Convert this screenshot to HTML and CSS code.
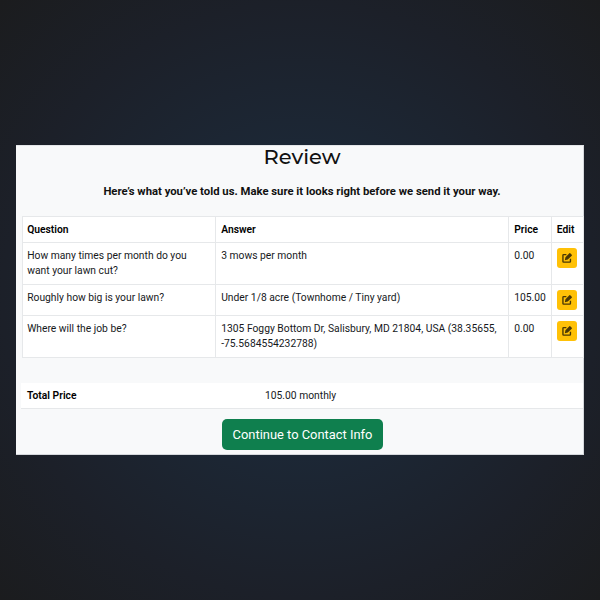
FILE: index.html
```html
<!DOCTYPE html>
<html lang="en">
<head>
  <meta charset="UTF-8">
  <meta name="viewport" content="width=device-width, initial-scale=1.0">
  <title>Review</title>
  <link rel="stylesheet" href="styles.css">
</head>
<body>

  <main class="card">
    <h1 class="title">Review</h1>
    <p class="lead">Here’s what you’ve told us. Make sure it looks right before we send it your way.</p>

    <table class="review-table">
      <colgroup>
        <col class="col-question">
        <col class="col-answer">
        <col class="col-price">
        <col class="col-edit">
      </colgroup>
      <thead>
        <tr>
          <th>Question</th>
          <th>Answer</th>
          <th>Price</th>
          <th>Edit</th>
        </tr>
      </thead>
      <tbody>
        <tr>
          <td>How many times per month do you want your lawn cut?</td>
          <td>3 mows per month</td>
          <td>0.00</td>
          <td><button class="edit-btn" aria-label="Edit"><svg viewBox="0 0 16 16" width="10" height="10"><path class="icon-box" d="M7 2.500H2.500A1 1 0 0 0 1.500 3.500v10a1 1 0 0 0 1 1h10a1 1 0 0 0 1-1V9"/><path d="M15.600 2.800 13.200.4a1 1 0 0 0-1.400 0L5.500 6.700 4.500 11.500l4.800-1 6.300-6.300a1 1 0 0 0 0-1.400Z"/></svg></button></td>
        </tr>
        <tr>
          <td>Roughly how big is your lawn?</td>
          <td>Under 1/8 acre (Townhome / Tiny yard)</td>
          <td>105.00</td>
          <td><button class="edit-btn" aria-label="Edit"><svg viewBox="0 0 16 16" width="10" height="10"><path class="icon-box" d="M7 2.500H2.500A1 1 0 0 0 1.500 3.500v10a1 1 0 0 0 1 1h10a1 1 0 0 0 1-1V9"/><path d="M15.600 2.800 13.200.4a1 1 0 0 0-1.400 0L5.500 6.700 4.500 11.500l4.800-1 6.300-6.300a1 1 0 0 0 0-1.400Z"/></svg></button></td>
        </tr>
        <tr>
          <td>Where will the job be?</td>
          <td>1305 Foggy Bottom Dr, Salisbury, MD 21804, USA (38.35655, -75.5684554232788)</td>
          <td>0.00</td>
          <td><button class="edit-btn" aria-label="Edit"><svg viewBox="0 0 16 16" width="10" height="10"><path class="icon-box" d="M7 2.500H2.500A1 1 0 0 0 1.500 3.500v10a1 1 0 0 0 1 1h10a1 1 0 0 0 1-1V9"/><path d="M15.600 2.800 13.200.4a1 1 0 0 0-1.400 0L5.500 6.700 4.500 11.500l4.800-1 6.300-6.300a1 1 0 0 0 0-1.400Z"/></svg></button></td>
        </tr>
      </tbody>
    </table>

    <div class="total">
      <strong class="total-label">Total Price</strong>
      <span>105.00 monthly</span>
    </div>

    <div class="actions">
      <button class="continue-btn">Continue to Contact Info</button>
    </div>
  </main>

</body>
</html>
```

FILE: styles.css
```css
* {
  box-sizing: border-box;
}

body {
  margin: 0;
  height: 600px;
  padding-top: 145px;
  font-family: Roboto, Arial, sans-serif;
  font-size: 10.3px;
  color: #16191c;
  background: radial-gradient(circle at center, #1e2b3c 0%, #1c2735 37%, #1c2029 70%, #1b1c1e 100%);
  overflow: hidden;
}

.card {
  width: 568px;
  height: 310px;
  margin: 0 auto;
  padding: 0 0 0 5px;
  background-color: #f8f9fa;
  border-right: 1px solid #d5d8dc;
  border-bottom: 1px solid #d5d8dc;
  border-top: 1px solid #e4e6e9;
}

.title {
  margin: 0;
  height: 21px;
  font-family: Montserrat, Inter, sans-serif;
  font-size: 21px;
  font-weight: 500;
  line-height: 21px;
  text-align: center;
  color: #111;
}

.lead {
  margin: 17px 0 0;
  height: 16px;
  font-size: 11.3px;
  font-weight: 700;
  line-height: 16px;
  text-align: center;
  color: #111;
}

.review-table {
  width: 561px;
  margin: 16px 0 0 1px;
  border-collapse: collapse;
  table-layout: fixed;
  background-color: #fff;
  line-height: 15.5px;
}

.col-question { width: 193px; }
.col-answer { width: 293px; }
.col-price { width: 43px; }
.col-edit { width: 32px; }

.review-table th,
.review-table td {
  padding: 5px 5.2px;
  border: 1px solid #e6e8ea;
  text-align: left;
  vertical-align: top;
}

.review-table th:first-child,
.review-table td:first-child {
  padding-left: 4.2px;
}

.review-table th {
  padding-top: 4.5px;
  padding-bottom: 4.5px;
  color: #000;
  font-weight: 600;
}

.review-table th:last-child,
.review-table td:last-child {
  padding-left: 4.8px;
  padding-right: 0;
}

.edit-btn {
  display: flex;
  align-items: center;
  justify-content: center;
  width: 20px;
  height: 20px;
  padding: 0;
  border: none;
  border-radius: 3px;
  background-color: #ffc107;
}

.edit-btn svg {
  fill: #4a3805;
}

.icon-box {
  fill: none;
  stroke: #4a3805;
  stroke-width: 2.200;
}

.total {
  display: grid;
  grid-template-columns: 238px 1fr;
  width: 562px;
  height: 26px;
  margin-top: 25px;
  padding-left: 6px;
  align-items: center;
  background-color: #fff;
  border-bottom: 1px solid #e6e8ea;
}

.total-label {
  font-weight: 600;
  color: #000;
}

.actions {
  display: flex;
  justify-content: center;
  width: 562px;
  margin-top: 10px;
}

.continue-btn {
  width: 161px;
  height: 31px;
  padding: 1px 0 0 1px;
  border: none;
  border-radius: 5px;
  background-color: #0f7f4e;
  color: #fff;
  font-family: Roboto, Arial, sans-serif;
  font-size: 12.9px;
}
```
